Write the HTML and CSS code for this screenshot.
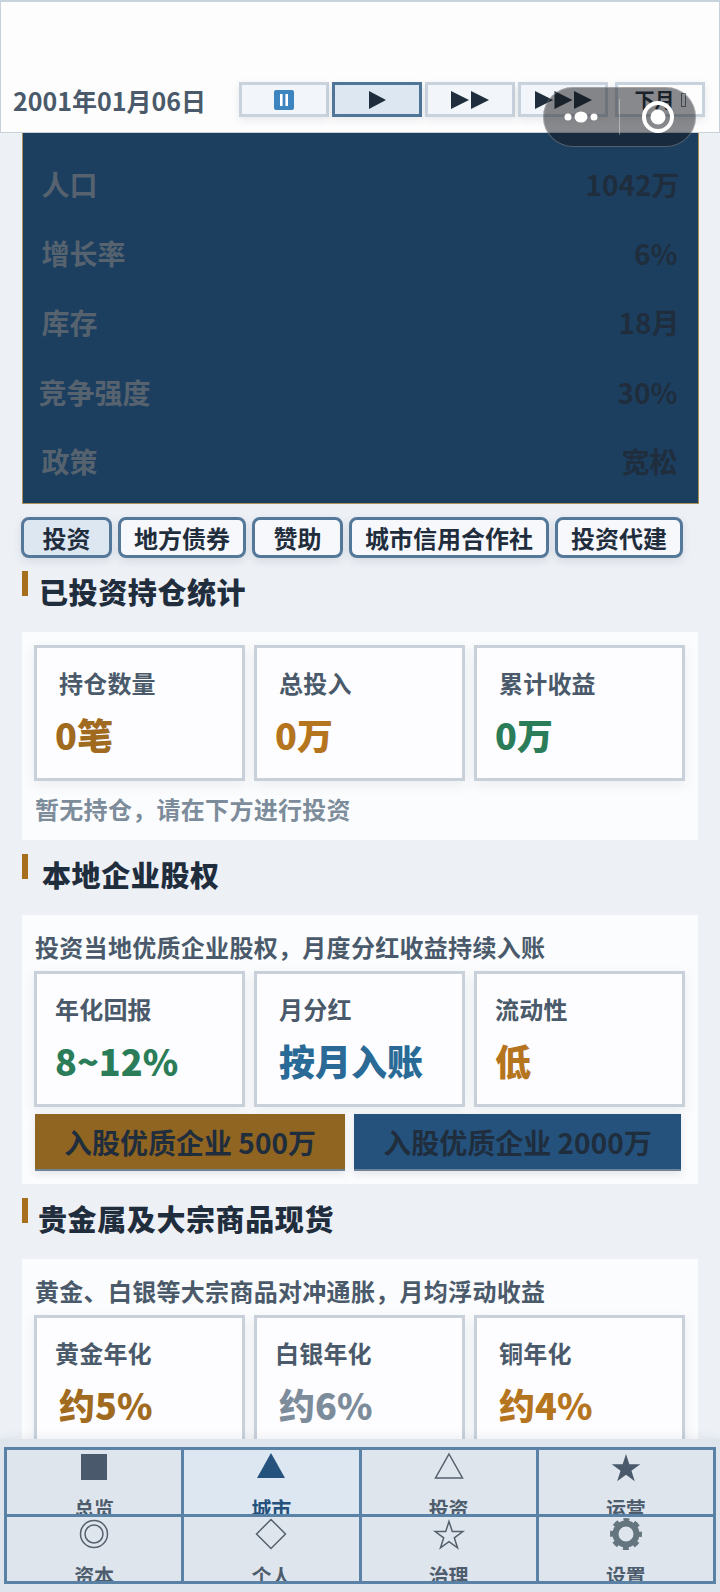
FILE: index.html
```html
<!DOCTYPE html>
<html lang="zh-CN">
<head>
    <meta charset="UTF-8">
    <meta name="viewport" content="width=device-width, initial-scale=1.0">
    <title>城市投资</title>
    <link rel="stylesheet" href="styles.css">
</head>
<body>
    <!-- Date and speed controls -->
    <header class="topbar">
        <div class="date">2001年01月06日</div>
        <div class="speeds">
            <button class="speed">
                <svg class="pause" width="20" height="20" viewBox="0 0 20 20"><rect width="20" height="20" rx="2" fill="#3c85c0"/><rect x="6" y="4" width="2.6" height="12" fill="#fff"/><rect x="11.4" y="4" width="2.6" height="12" fill="#fff"/></svg>
            </button>
            <button class="speed speed-on">
                <svg width="18" height="18" viewBox="0 0 18 18"><polygon points="1,0 18,9 1,18"/></svg>
            </button>
            <button class="speed">
                <svg width="38" height="18" viewBox="0 0 38 18"><polygon points="0,0 18,9 0,18"/><polygon points="20,0 38,9 20,18"/></svg>
            </button>
            <button class="speed">
                <svg width="57" height="18" viewBox="0 0 57 18"><polygon points="0,0 18,9 0,18"/><polygon points="19.5,0 37.5,9 19.5,18"/><polygon points="39,0 57,9 39,18"/></svg>
            </button>
            <button class="speed speed-next">下月<span class="tofu"></span></button>
        </div>
    </header>

    <!-- Mini program capsule -->
    <div class="capsule">
        <svg width="153" height="60" viewBox="0 0 153 60">
            <ellipse cx="25" cy="30" rx="3.5" ry="3.5" fill="#fff"/>
            <ellipse cx="38" cy="30" rx="6.5" ry="5.5" fill="#fff"/>
            <ellipse cx="51" cy="30" rx="3.5" ry="3.5" fill="#fff"/>
            <rect x="76" y="12" width="1" height="36" fill="#fff" fill-opacity="0.35"/>
            <circle cx="115" cy="30" r="14" fill="none" stroke="#fff" stroke-width="4"/>
            <circle cx="115" cy="30" r="7.5" fill="#fff"/>
        </svg>
    </div>

    <main class="content">
        <!-- City numbers -->
        <section class="city">
            <div class="city-row"><span>人口</span><span>1042万</span></div>
            <div class="city-row city-row-b"><span>增长率</span><span>6%</span></div>
            <div class="city-row"><span>库存</span><span>18月</span></div>
            <div class="city-row city-row-b city-row-c"><span>竞争强度</span><span>30%</span></div>
            <div class="city-row city-row-b"><span>政策</span><span>宽松</span></div>
        </section>

        <nav class="tabs">
            <button class="tab tab-on">投资</button>
            <button class="tab">地方债券</button>
            <button class="tab">赞助</button>
            <button class="tab">城市信用合作社</button>
            <button class="tab">投资代建</button>
        </nav>

        <div class="sec-head"><h2>已投资持仓统计</h2></div>
        <section class="panel panel-first">
            <div class="stats">
                <div class="stat">
                    <div class="stat-label nudge">持仓数量</div>
                    <div class="stat-value gold">0笔</div>
                </div>
                <div class="stat">
                    <div class="stat-label nudge">总投入</div>
                    <div class="stat-value amber">0万</div>
                </div>
                <div class="stat">
                    <div class="stat-label nudge">累计收益</div>
                    <div class="stat-value green">0万</div>
                </div>
            </div>
            <p class="note">暂无持仓，请在下方进行投资</p>
        </section>

        <div class="sec-head sec-head-2"><h2>本地企业股权</h2></div>
        <section class="panel">
            <p class="desc">投资当地优质企业股权，月度分红收益持续入账</p>
            <div class="stats">
                <div class="stat">
                    <div class="stat-label">年化回报</div>
                    <div class="stat-value green">8~12%</div>
                </div>
                <div class="stat">
                    <div class="stat-label nudge">月分红</div>
                    <div class="stat-value blue nudge">按月入账</div>
                </div>
                <div class="stat">
                    <div class="stat-label">流动性</div>
                    <div class="stat-value amber">低</div>
                </div>
            </div>
            <div class="actions">
                <button class="action action-gold">入股优质企业 500万</button>
                <button class="action action-blue">入股优质企业 2000万</button>
            </div>
        </section>

        <div class="sec-head sec-head-3"><h2>贵金属及大宗商品现货</h2></div>
        <section class="panel">
            <p class="desc">黄金、白银等大宗商品对冲通胀，月均浮动收益</p>
            <div class="stats">
                <div class="stat">
                    <div class="stat-label">黄金年化</div>
                    <div class="stat-value gold nudge">约5%</div>
                </div>
                <div class="stat">
                    <div class="stat-label">白银年化</div>
                    <div class="stat-value grey nudge">约6%</div>
                </div>
                <div class="stat">
                    <div class="stat-label nudge">铜年化</div>
                    <div class="stat-value amber nudge">约4%</div>
                </div>
            </div>
        </section>
    </main>

    <!-- Bottom navigation -->
    <footer class="bottom">
        <div class="nav-grid">
            <div class="nav-cell">
                <svg class="nav-icon" viewBox="0 0 34 34"><rect x="4" y="4" width="26" height="26" fill="#4a5a6c"/></svg>
                <span>总览</span>
            </div>
            <div class="nav-cell nav-on">
                <svg class="nav-icon" viewBox="0 0 34 34"><polygon points="17,3 31,28 3,28" fill="#24527c"/></svg>
                <span>城市</span>
            </div>
            <div class="nav-cell">
                <svg class="nav-icon line" viewBox="0 0 34 34"><polygon points="17,4 30.5,28 3.5,28"/></svg>
                <span>投资</span>
            </div>
            <div class="nav-cell">
                <svg class="nav-icon" viewBox="0 0 34 34"><polygon fill="#4a5a6c" points="17,4 20.37,14.36 31.27,14.36 22.45,20.77 25.82,31.14 17,24.73 8.18,31.14 11.55,20.77 2.73,14.36 13.63,14.36"/></svg>
                <span>运营</span>
            </div>
            <div class="nav-cell">
                <svg class="nav-icon line" viewBox="0 0 34 34"><circle cx="17" cy="17" r="13.5"/><circle cx="17" cy="17" r="9"/></svg>
                <span>资本</span>
            </div>
            <div class="nav-cell">
                <svg class="nav-icon line" viewBox="0 0 34 34"><polygon points="17,2.5 31.5,17 17,31.5 2.5,17"/></svg>
                <span>个人</span>
            </div>
            <div class="nav-cell">
                <svg class="nav-icon line" viewBox="0 0 34 34"><polygon points="17,4.5 20.3,14.6 30.8,14.6 22.3,20.8 25.5,30.8 17,24.6 8.5,30.8 11.7,20.8 3.2,14.6 13.7,14.6"/></svg>
                <span>治理</span>
            </div>
            <div class="nav-cell">
                <svg class="nav-icon" viewBox="0 0 34 34">
                    <circle cx="17" cy="17" r="10.5" fill="none" stroke="#65757f" stroke-width="6"/>
                    <circle cx="17" cy="17" r="13.5" fill="none" stroke="#65757f" stroke-width="5" stroke-dasharray="5.6 5" stroke-dashoffset="2.8"/>
                </svg>
                <span>设置</span>
            </div>
        </div>
    </footer>
</body>
</html>
```

FILE: styles.css
```css
* {
    box-sizing: border-box;
}
html, body {
    margin: 0;
    height: 1592px;
    overflow: hidden;
}
body {
    width: 720px;
    position: relative;
    background-color: #edf1f6;
    font-family: "Noto Sans CJK SC", "Noto Sans", sans-serif;
    font-weight: 700;
    color: #1f2d3d;
}
button {
    font-family: inherit;
    font-weight: 700;
    color: inherit;
    cursor: pointer;
}
p, h2 {
    margin: 0;
}

/* top bar */
.topbar {
    height: 133px;
    display: flex;
    align-items: flex-end;
    padding: 0 14px 15px 12px;
    background-color: #fdfdfe;
    border: 1px solid #c8d2dc;
    border-top-width: 2px;
}
.date {
    width: 227px;
    height: 36px;
    margin-bottom: -1px;
    line-height: 36px;
    font-size: 25px;
    color: #4a5a6a;
    white-space: nowrap;
}
.speeds {
    display: flex;
    gap: 3px;
}
.speed {
    width: 90px;
    height: 35px;
    padding: 0;
    display: flex;
    align-items: center;
    justify-content: center;
    background-color: #f2f5f9;
    border: 3px solid #c8d2dc;
    box-shadow: 0 3px 8px rgba(30, 50, 70, 0.1);
    font-size: 20px;
}
.speed svg {
    fill: #1f2d3d;
}
.speed-on {
    background-color: #dce7f2;
    border-color: #4f7698;
}
.speed-next {
    margin-left: 4px;
    background-color: #fdfdfe;
    gap: 6px;
}
.tofu {
    width: 5px;
    height: 14px;
    border: 1px solid #6c7885;
}
.capsule {
    position: absolute;
    left: 543px;
    top: 87px;
    width: 153px;
    height: 60px;
    border-radius: 30px;
    background-color: rgba(20, 22, 26, 0.5);
    box-shadow: inset 0 0 0 1px rgba(255, 255, 255, 0.25);
}
.capsule svg {
    display: block;
}

.content {
    padding: 0 22px;
}

/* city numbers */
.city {
    height: 371px;
    margin: 0 -0.5px;
    padding: 16px 18px 0 19px;
    background-color: #1c3f60;
    border: 1px solid #a8925a;
    border-top: none;
}
.city-row {
    height: 69.4px;
    display: flex;
    align-items: center;
    justify-content: space-between;
    font-size: 28px;
    color: #1f2d3d;
}
.city-row span:first-child {
    color: #56636f;
}
.city-row-b {
    padding-right: 2px;
}
.city-row-c span:first-child {
    margin-left: -3px;
}

/* tabs */
.tabs {
    display: flex;
    gap: 6px;
    margin: 13px 0 0 -1px;
}
.tab {
    min-width: 91px;
    height: 41px;
    padding: 0 13px;
    font-size: 24px;
    line-height: 1;
    background-color: #f6f8fb;
    border: 3px solid #54789a;
    border-radius: 8px;
    box-shadow: 0 3px 8px rgba(30, 50, 70, 0.12);
}
.tab-on {
    background-color: #dce7f2;
}

/* section heads */
.sec-head {
    height: 61px;
    margin-top: 14px;
    display: flex;
}
.sec-head::before {
    content: "";
    width: 6px;
    height: 25px;
    background-color: #a66f1e;
}
.sec-head h2 {
    margin-left: 11px;
    font-size: 29px;
    font-weight: 900;
    line-height: 40px;
    letter-spacing: 0.6px;
    color: #1f2d3d;
}
.tabs + .sec-head {
    margin-top: 13px;
}
.sec-head-2 h2 {
    margin-left: 14px;
}
.sec-head-3 h2 {
    margin-left: 10px;
}

/* panels */
.panel {
    padding: 12px 13px 13px 12px;
    background-color: #fbfcfe;
}
.panel-first {
    padding-top: 13px;
    padding-bottom: 9px;
}
.desc {
    margin: 0 0 4px 1px;
    font-size: 24px;
    line-height: 40px;
    letter-spacing: 0.3px;
    color: #4a5a6a;
    white-space: nowrap;
}
.note {
    margin: 6px 0 0 1px;
    font-size: 24px;
    line-height: 44px;
    letter-spacing: 0.3px;
    color: #7d8c9a;
}
.stats {
    display: grid;
    grid-template-columns: repeat(3, 1fr);
    gap: 9px;
}
.stat {
    height: 136px;
    padding: 18px 0 0 18px;
    background-color: #fdfdff;
    border: 3px solid #c8d0da;
    box-shadow: 0 4px 12px rgba(30, 50, 70, 0.08);
}
.stat-label {
    font-size: 24px;
    line-height: 34px;
    letter-spacing: 0.2px;
    color: #4a5a6a;
}
.stat-value {
    margin-top: 8px;
    font-size: 36px;
    font-weight: 900;
    line-height: 52px;
    white-space: nowrap;
}
.nudge {
    margin-left: 4px;
}
.gold { color: #a06b1f; }
.amber { color: #b5751f; }
.green { color: #2a7d58; }
.blue { color: #2a6a96; }
.grey { color: #7d8c9a; }

.actions {
    display: flex;
    gap: 9px;
    margin: 7px 4px 0 1px;
}
.action {
    height: 57px;
    padding: 0 29px;
    font-size: 28px;
    line-height: 1;
    border: none;
    border-bottom: 2px solid #6f8194;
    box-shadow: 0 3px 8px rgba(30, 50, 70, 0.12);
    white-space: nowrap;
}
.action-gold {
    background-color: #8f6521;
}
.action-blue {
    flex: 1;
    background-color: #24527c;
}

/* bottom nav */
.bottom {
    position: absolute;
    left: 0;
    right: 0;
    bottom: 0;
    height: 153px;
    padding: 8px 4px 0 4px;
    background-color: #dfe5ed;
    box-shadow: 0 -3px 8px rgba(30, 50, 70, 0.06);
}
.nav-grid {
    display: grid;
    grid-template-columns: repeat(4, 1fr);
    grid-auto-rows: 67px;
    border-top: 3px solid #5a82a6;
    border-left: 3px solid #5a82a6;
}
.nav-cell {
    display: flex;
    flex-direction: column;
    align-items: center;
    overflow: hidden;
    border-right: 3px solid #5a82a6;
    border-bottom: 3px solid #5a82a6;
    font-size: 20px;
    color: #4d5d6d;
}
.nav-cell span {
    margin-top: 10px;
    line-height: 30px;
    flex-shrink: 0;
}
.nav-icon {
    width: 34px;
    height: 34px;
    flex-shrink: 0;
}
.line {
    fill: none;
    stroke: #55606d;
    stroke-width: 1.5;
}
.nav-on {
    background-color: #dce7f2;
    color: #24527c;
}
```
